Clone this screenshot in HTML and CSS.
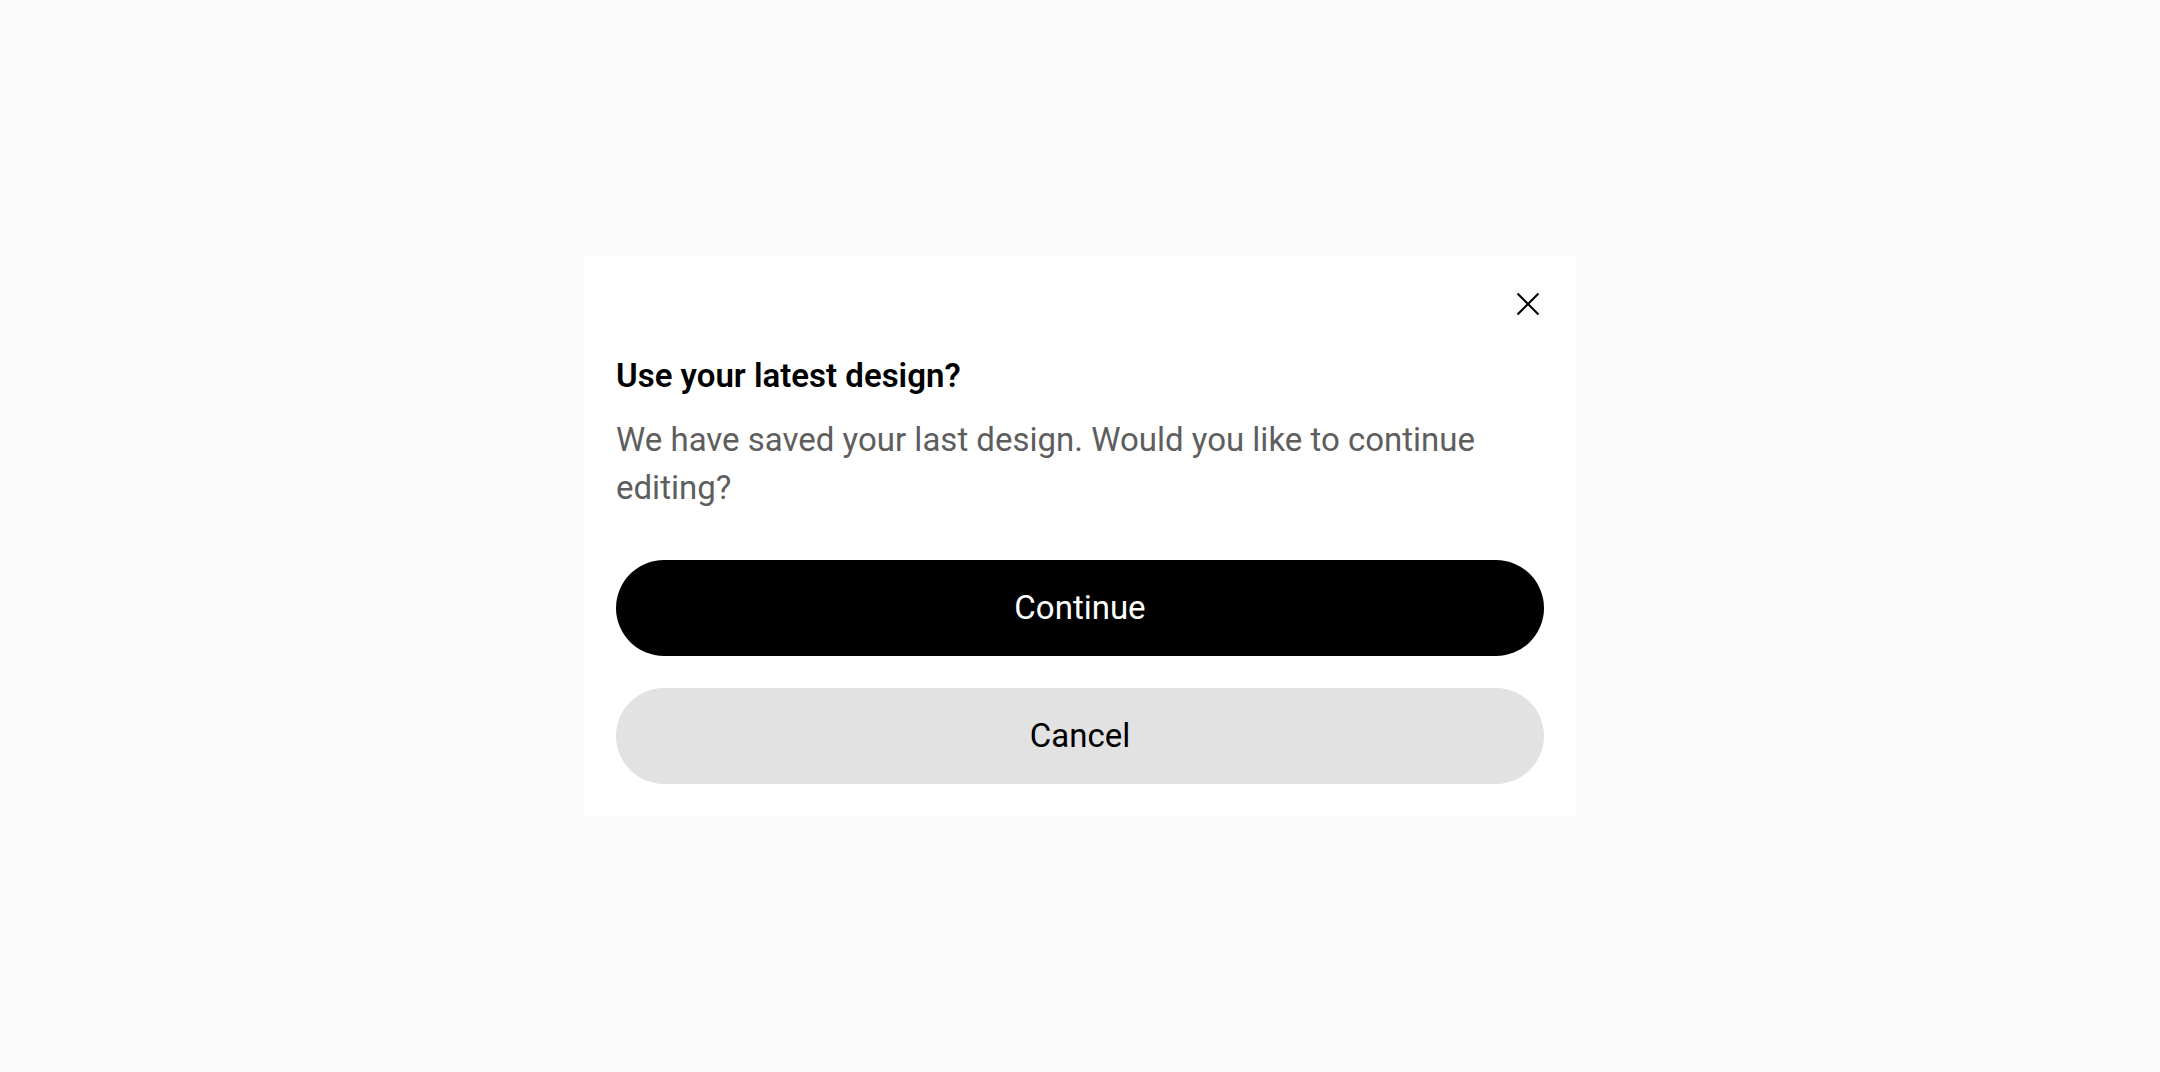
FILE: index.html
```
<!DOCTYPE html>
<html lang="en">
<head>
    <meta charset="utf-8">
    <title>Use your latest design?</title>
    <link rel="stylesheet" href="styles.css">
</head>
<body>
    <div class="dialog" role="dialog" aria-labelledby="dialogTitle" aria-describedby="dialogText">
        <button type="button" class="close-button" aria-label="Close">
            <svg viewBox="0 0 32 32" width="32" height="32" fill="none" stroke="currentColor" stroke-width="2">
                <path d="M5.5 5.5l21 21M26.5 5.5l-21 21"/>
            </svg>
        </button>

        <h2 id="dialogTitle" class="dialog-title">Use your latest design?</h2>
        <p id="dialogText" class="dialog-text">We have saved your last design. Would you like to continue editing?</p>

        <div class="dialog-actions">
            <button type="button" class="button button-primary">Continue</button>
            <button type="button" class="button button-secondary">Cancel</button>
        </div>
    </div>
</body>
</html>
```

FILE: styles.css
```
body {
    margin: 0;
    min-height: 100vh;
    display: flex;
    align-items: center;
    justify-content: center;
    font-family: Roboto, sans-serif;
    font-size: 33px;
    line-height: 48px;
    background: #fafafa;
}

.dialog {
    display: flex;
    flex-direction: column;
    box-sizing: border-box;
    width: 100%;
    max-width: 992px;
    padding: 32px;
    background: #fff;
}

.close-button {
    align-self: flex-end;
    display: flex;
    margin-bottom: 32px;
    padding: 0;
    border: none;
    background: none;
    color: #000;
    cursor: pointer;
}

.dialog-title {
    margin: 0 0 16px;
    font-size: 33px;
    font-weight: 600;
    color: #000;
}

.dialog-text {
    margin: 0 0 48px;
    color: #5e5e5e;
}

.dialog-actions {
    display: flex;
    flex-direction: column;
    gap: 32px;
}

.button {
    padding: 24px 32px;
    border: none;
    border-radius: 48px;
    font: inherit;
    cursor: pointer;
}

.button-primary {
    background: #000;
    color: #fff;
}

.button-secondary {
    background: #e2e2e2;
    color: #000;
}
```
